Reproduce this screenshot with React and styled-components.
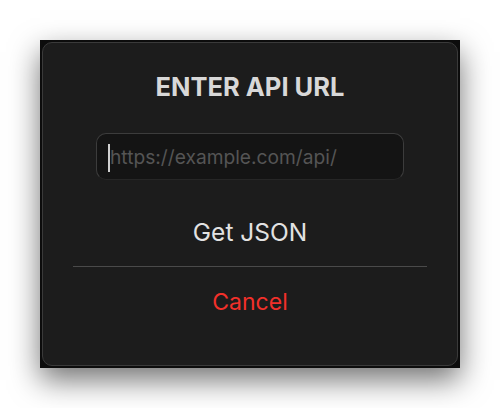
import React from 'react'
import styled, {createGlobalStyle} from 'styled-components'

const GlobalStyle = createGlobalStyle`
  html, body {
    margin: 0;
    background: #ffffff;
  }
`

const Page = styled.div`
  padding: 40px;
`

const Frame = styled.div`
  box-sizing: border-box;
  width: 420px;
  height: 328px;
  padding: 2px;
  background: #0c0c0c;
  box-shadow: 0 12px 28px rgba(0, 0, 0, 0.55);
`

const Dialog = styled.div`
  box-sizing: border-box;
  height: 100%;
  display: flex;
  flex-direction: column;
  align-items: center;
  background: #1c1c1c;
  border: 1px solid #3a3a3a;
  border-radius: 10px;
`

const Title = styled.h1`
  margin: 26px 0 0;
  height: 36px;
  line-height: 36px;
  font-family: Inter, sans-serif;
  font-size: 25.5px;
  font-weight: 700;
  color: #d8d8d8;
`

const Field = styled.div`
  position: relative;
  margin-top: 28px;
  width: 308px;
  height: 47px;
`

const Input = styled.input`
  box-sizing: border-box;
  width: 100%;
  height: 100%;
  padding: 0 0 0 13px;
  border: 1px solid #3c3c3c;
  border-bottom-color: #262626;
  border-radius: 10px;
  background: #141414;
  outline: none;
  caret-color: transparent;
  font-family: Inter, sans-serif;
  font-size: 19.2px;
  color: #e0e0e0;

  &::placeholder {
    color: #555555;
  }
`

const Caret = styled.span`
  position: absolute;
  left: 12px;
  top: 11px;
  width: 2px;
  height: 28px;
  background: #d0d0d0;
`

const Action = styled.button`
  margin-top: ${({$gap}) => $gap}px;
  height: 50px;
  padding: 0 20px;
  border: none;
  background: transparent;
  line-height: 50px;
  font-family: Inter, sans-serif;
  font-size: ${({$size}) => $size}px;
  color: ${({$danger}) => ($danger ? '#f2302a' : '#e2e2e2')};
  cursor: pointer;
`

const Divider = styled.div`
  align-self: stretch;
  margin: 9px 30px 0;
  height: 1px;
  background: #4a4a4a;
`

export default function App() {
  return (
    <>
      <GlobalStyle />
      <Page>
        <Frame>
          <Dialog>
            <Title>ENTER API URL</Title>
            <Field>
              <Input type="text" placeholder="https://example.com/api/" />
              <Caret />
            </Field>
            <Action $gap={27} $size={24.5}>
              Get JSON
            </Action>
            <Divider />
            <Action $gap={10} $size={23} $danger>
              Cancel
            </Action>
          </Dialog>
        </Frame>
      </Page>
    </>
  )
}
